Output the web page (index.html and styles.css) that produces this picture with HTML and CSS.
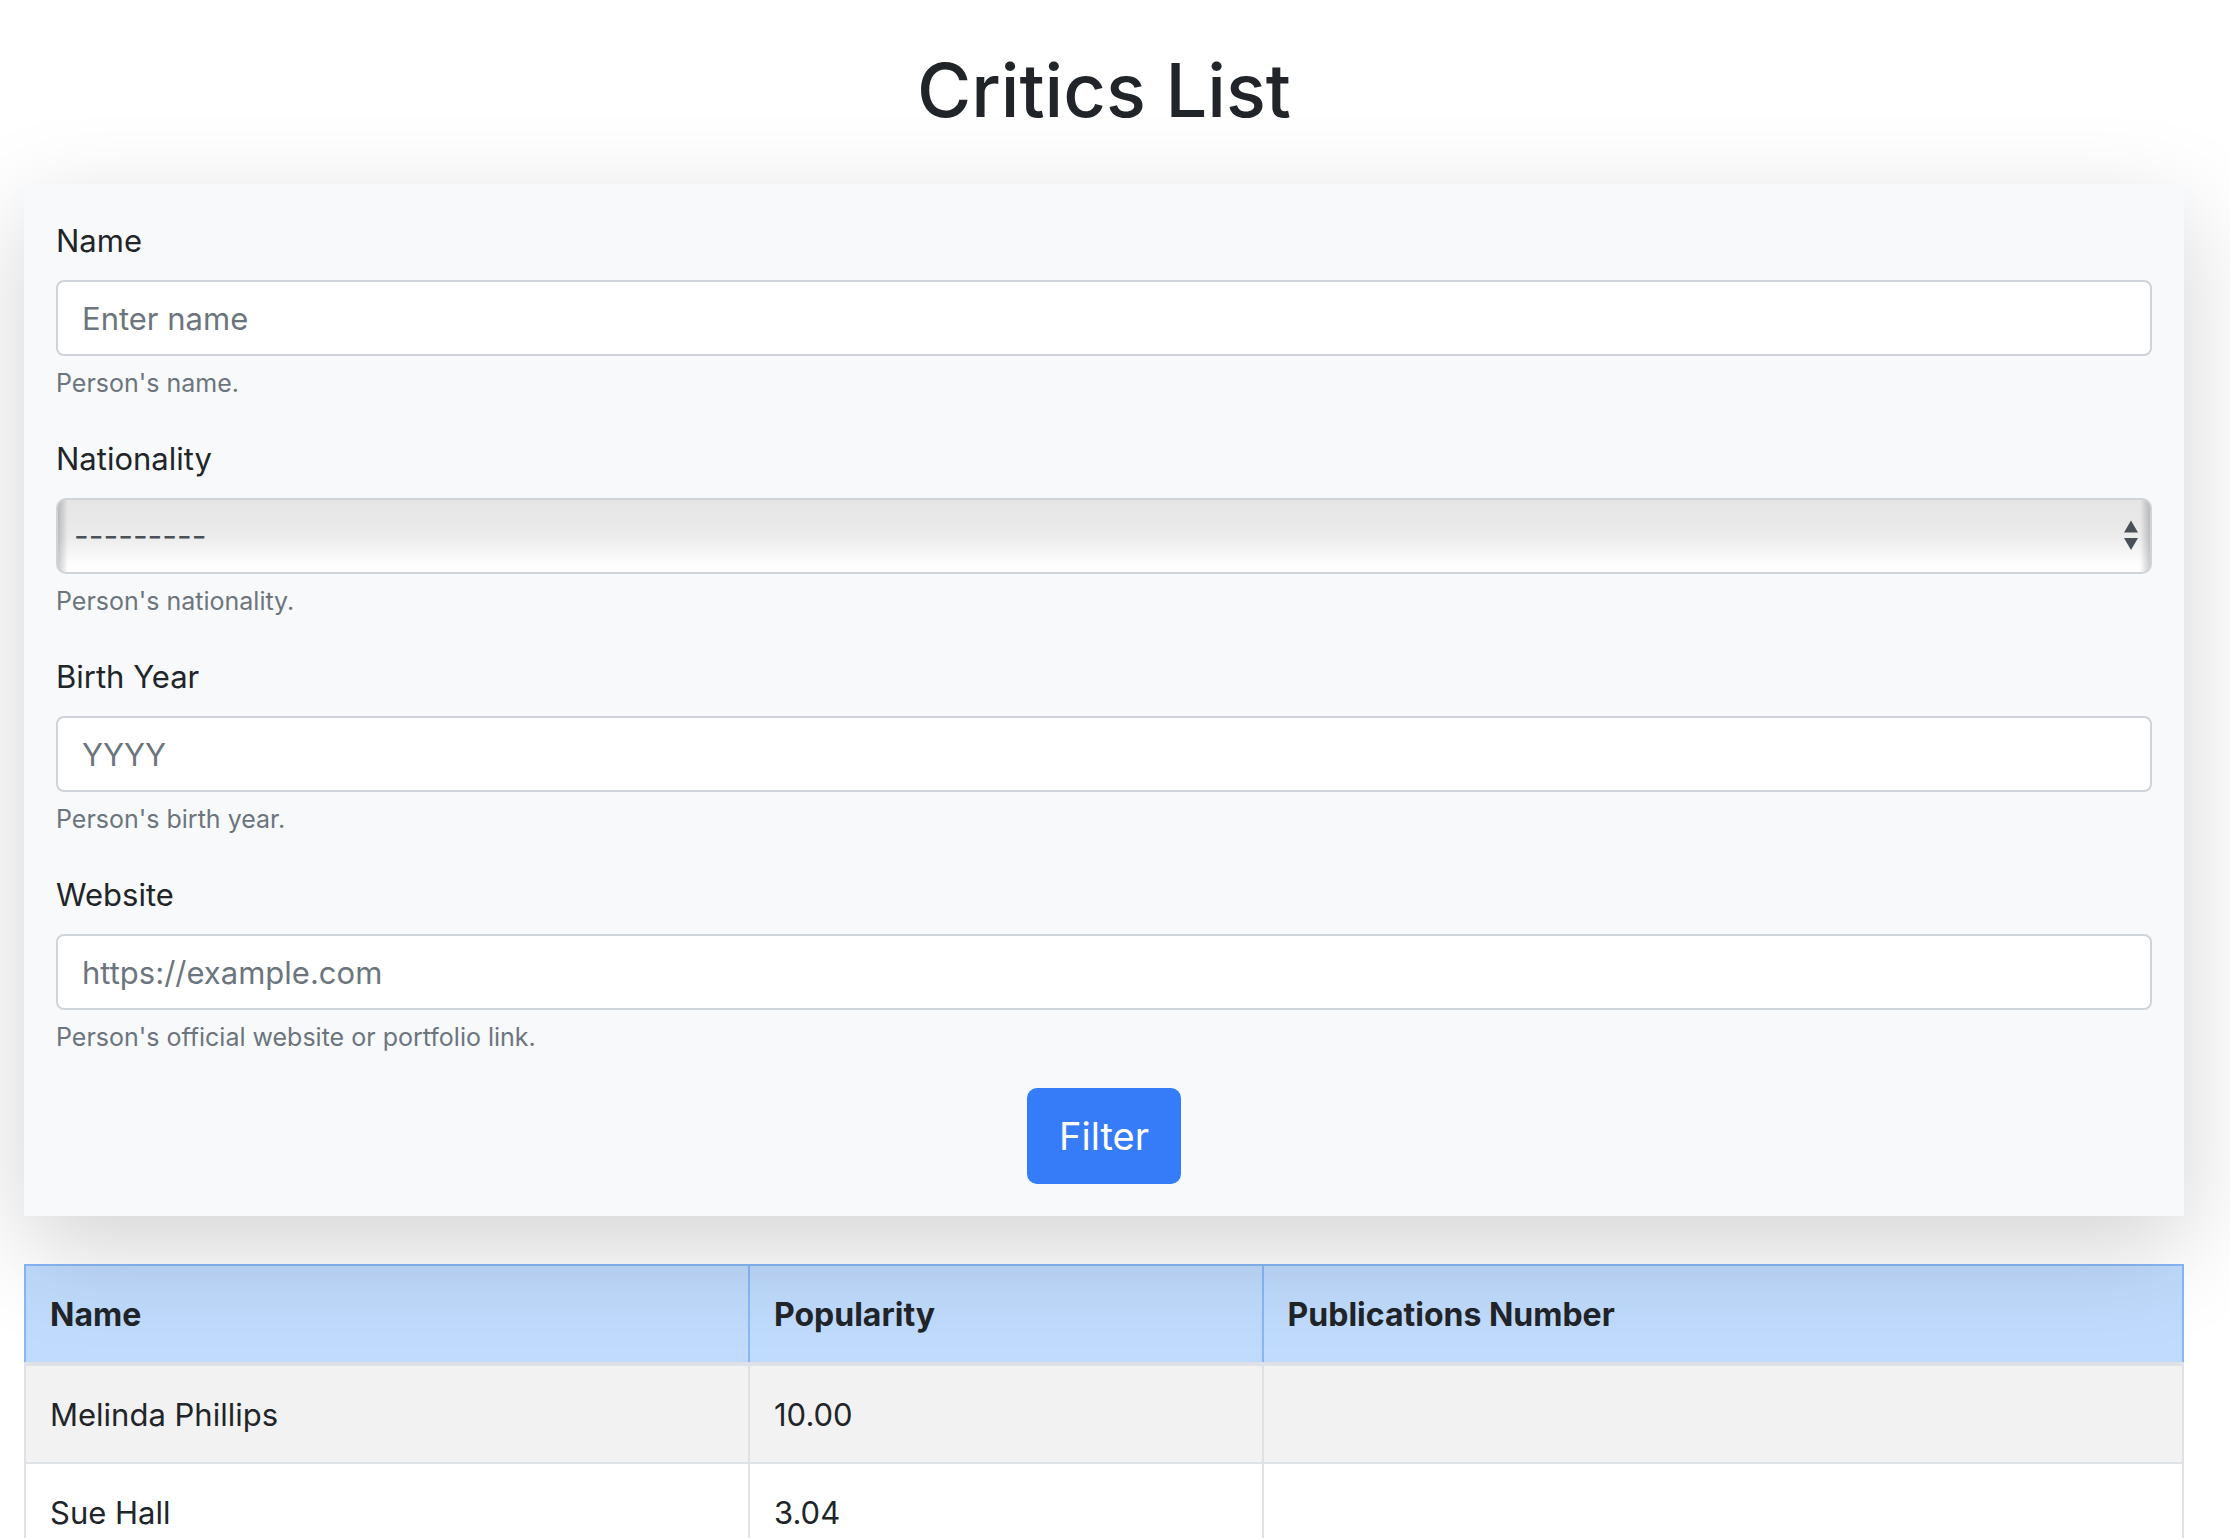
FILE: index.html
```html
<!DOCTYPE html>
<html lang="en">
<head>
  <meta charset="utf-8">
  <title>Critics List</title>
  <link rel="stylesheet" href="styles.css">
</head>
<body>
  <main class="page">
    <h1 class="title">Critics List</h1>

    <form class="filter" action="#" method="get">
      <div class="field">
        <label class="field-label" for="name">Name</label>
        <input class="control" id="name" name="name" type="text" placeholder="Enter name" aria-describedby="name-help">
        <small class="help" id="name-help">Person's name.</small>
      </div>
      <div class="field">
        <label class="field-label" for="nationality">Nationality</label>
        <div class="select-wrap">
          <select class="control control-select" id="nationality" name="nationality" aria-describedby="nationality-help">
            <option value="">---------</option>
          </select>
          <svg class="select-arrows" width="14" height="30" viewBox="0 0 14 30" aria-hidden="true">
            <path d="M7 0.5 14 12.5H0ZM0 18h14L7 30Z" fill="#495057"/>
          </svg>
        </div>
        <small class="help" id="nationality-help">Person's nationality.</small>
      </div>
      <div class="field">
        <label class="field-label" for="birth-year">Birth Year</label>
        <input class="control" id="birth-year" name="birth_year" type="text" placeholder="YYYY" aria-describedby="birth-year-help">
        <small class="help" id="birth-year-help">Person's birth year.</small>
      </div>
      <div class="field">
        <label class="field-label" for="website">Website</label>
        <input class="control" id="website" name="website" type="url" placeholder="https://example.com" aria-describedby="website-help">
        <small class="help" id="website-help">Person's official website or portfolio link.</small>
      </div>
      <button class="submit" type="submit">Filter</button>
    </form>

    <table class="critics">
      <colgroup>
        <col class="col-name">
        <col class="col-popularity">
        <col>
      </colgroup>
      <thead>
        <tr><th scope="col">Name</th><th scope="col">Popularity</th><th scope="col">Publications Number</th></tr>
      </thead>
      <tbody>
        <tr><td>Melinda Phillips</td><td>10.00</td><td></td></tr>
        <tr><td>Sue Hall</td><td>3.04</td><td></td></tr>
      </tbody>
    </table>
  </main>
</body>
</html>
```
FILE: styles.css
```css
*,
*::before,
*::after {
  box-sizing: border-box;
}

html {
  scrollbar-width: none;
}

body {
  margin: 0;
  background: #fff;
  color: #212529;
  font-family: Inter, "Liberation Sans", sans-serif;
  font-size: 31px;
  line-height: 48px;
}

.page {
  padding: 42px 46px 0 24px;
}

.title {
  margin: 0 0 46px;
  font-size: 74px;
  font-weight: 500;
  line-height: 96px;
  text-align: center;
}

/* Positioned so that its shadow falls over the table header. */
.filter {
  position: relative;
  display: flex;
  flex-direction: column;
  gap: 32px;
  margin-bottom: 48px;
  padding: 32px;
  background: #f8f9fb;
  box-shadow: 0 32px 96px rgba(0, 0, 0, 0.175);
}

.field {
  display: flex;
  flex-direction: column;
}

.field-label {
  margin-bottom: 14px;
  line-height: 50px;
}

.control {
  display: block;
  width: 100%;
  height: 76px;
  margin: 0;
  padding: 12px 24px;
  border: 2px solid #ced4da;
  border-radius: 8px;
  background: #fff;
  color: #495057;
  font: inherit;
}

.control::placeholder {
  color: #6c757d;
  opacity: 1;
}

.select-wrap {
  position: relative;
}

.control-select {
  appearance: none;
  padding: 12px 16px;
  border-radius: 10px;
  background:
    linear-gradient(to right, rgba(0, 0, 0, 0.2), rgba(0, 0, 0, 0)) left / 10px 100% no-repeat,
    linear-gradient(to left, rgba(0, 0, 0, 0.2), rgba(0, 0, 0, 0)) right / 10px 100% no-repeat,
    linear-gradient(#e6e6e6, #e8e8e8 25%, #ececec 52%, #fdfdfd 88%, #fff);
  font-size: 32px;
}

.select-arrows {
  position: absolute;
  top: 22px;
  right: 14px;
  pointer-events: none;
}

.help {
  margin-top: 8px;
  color: #6c757d;
  font-size: 25px;
  line-height: 38px;
}

.submit {
  align-self: center;
  padding: 16px 30px;
  border: 2px solid #367bf7;
  border-radius: 10px;
  background: #367bf7;
  color: #fff;
  font: inherit;
  font-size: 38px;
  line-height: 60px;
}

.critics {
  width: 100%;
  border-collapse: collapse;
  table-layout: fixed;
}

.col-name {
  width: 33.55%;
}

.col-popularity {
  width: 23.8%;
}

.critics th,
.critics td {
  height: 98px;
  padding: 25px 24px 23px;
  border: 2px solid #dee2e6;
  text-align: left;
}

.critics th {
  border-color: #88b7f8;
  border-bottom: 4px solid #dee2e6;
  background: #c0dbfd;
  font-size: 32px;
  font-weight: 700;
}

.critics tbody tr:nth-child(odd) {
  background: #f2f2f2;
}
```
